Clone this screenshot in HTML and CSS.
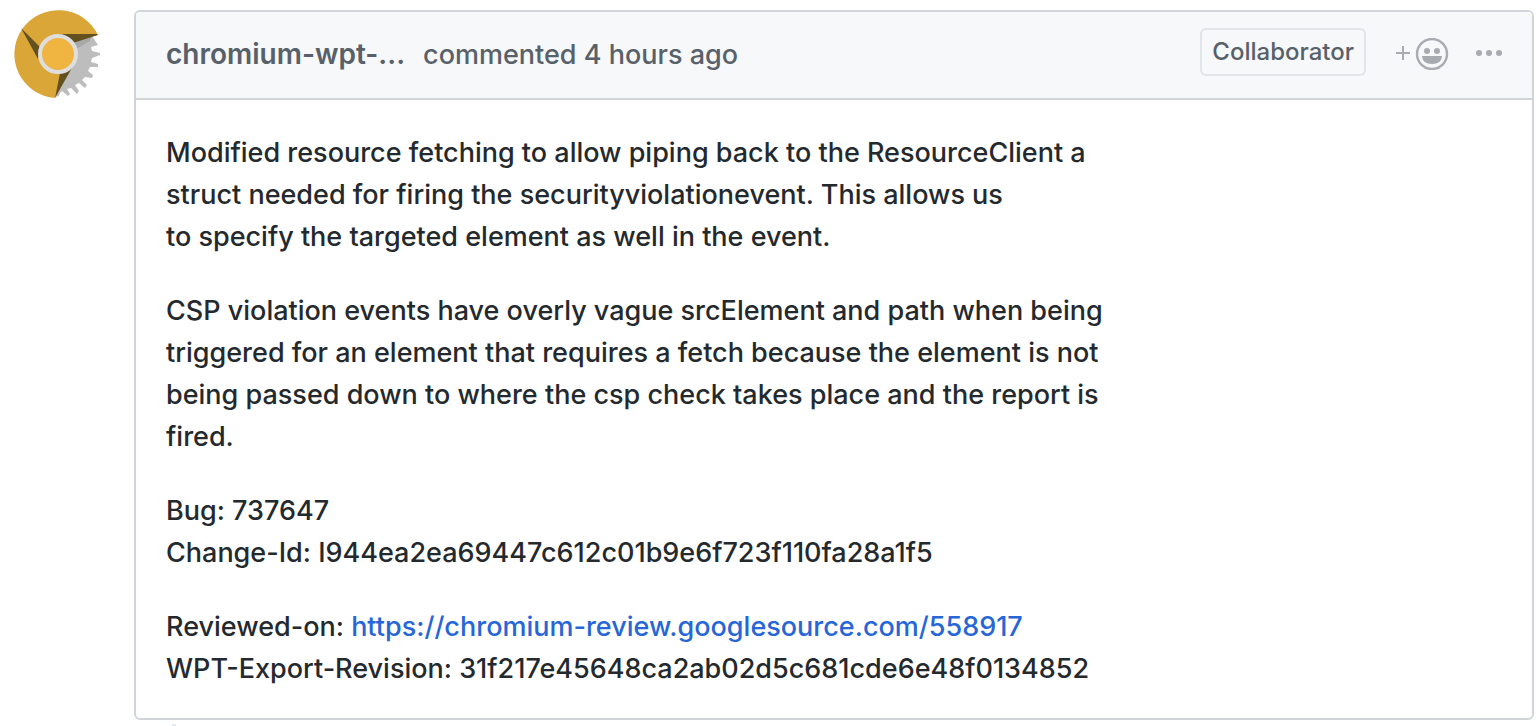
FILE: index.html
```html
<!DOCTYPE html>
<html lang="en">
<head>
<meta charset="utf-8">
<title>Comment</title>
<link rel="stylesheet" href="styles.css">
</head>
<body>
<main class="timeline">
  <svg class="avatar" viewBox="0 0 88 88" role="img" aria-label="chromium-wpt-export-bot">
    <path fill="#bdbdbd" d="M44 26H78L82 32L84 35L77 37L78 41L86 43L86 45L78 48L77 52L84 54L84 57L76 57L74 61L79 65L78 68L71 67L68 70L73 75L71 78L65 73L61 75L65 81L63 84L57 78L53 79L56 84L54 86L48 81L46 83L45 86L41 87L44 44Z"/>
    <path fill="#a8a8a8" d="M60 31L77 27L76 31L62 39Z"/>
    <path fill="#dba638" d="M84 25A44 44 0 1 0 41 88L50 62L44 44L60 24Z"/>
    <path fill="#63501f" d="M44 24H83L84 25L59 33ZM7 18L26 37L24 49ZM41 88L46 63L59 56Z"/>
    <circle cx="44" cy="44" r="18" fill="#f0b541" stroke="#dedede" stroke-width="4"/>
  </svg>
  <article class="comment">
    <header class="comment-header">
      <h3 class="comment-title"><strong class="author">chromium-wpt-...</strong><span>commented 4 hours ago</span></h3>
      <span class="label">Collaborator</span>
      <button class="icon-button reaction" aria-label="Add your reaction">
        <svg width="54" height="32" viewBox="0 0 54 32">
          <path d="M1 15H15M8 8V22" stroke="#a8abb0" stroke-width="2"/>
          <circle cx="37" cy="16" r="15" fill="none" stroke="#a8abb0" stroke-width="2.4"/>
          <g fill="#a8abb0"><circle cx="32" cy="13" r="3"/><circle cx="42" cy="13" r="3"/><path d="M27 18H47C47 23 43 26 37 26S27 23 27 18Z"/></g>
        </svg>
      </button>
      <button class="icon-button menu" aria-label="More options">
        <svg width="26" height="6" viewBox="0 0 26 6" fill="#a8abb0"><circle cx="3" cy="3" r="3"/><circle cx="13" cy="3" r="3"/><circle cx="23" cy="3" r="3"/></svg>
      </button>
    </header>
    <div class="comment-body">
      <p>Modified resource fetching to allow piping back to the ResourceClient a<br>struct needed for firing the securityviolationevent. This allows us<br>to specify the targeted element as well in the event.</p>
      <p>CSP violation events have overly vague srcElement and path when being<br>triggered for an element that requires a fetch because the element is not<br>being passed down to where the csp check takes place and the report is<br>fired.</p>
      <p>Bug: 737647<br>Change-Id: I944ea2ea69447c612c01b9e6f723f110fa28a1f5</p>
      <p>Reviewed-on: <a href="https://chromium-review.googlesource.com/558917">https://chromium-review.googlesource.com/558917</a><br>WPT-Export-Revision: 31f217e45648ca2ab02d5c681cde6e48f0134852</p>
    </div>
  </article>
</main>
<div class="timeline-line"></div>
</body>
</html>
```
FILE: styles.css
```css
* { box-sizing: border-box; }
body {
  margin: 0;
  background: #fff;
  color: #24292e;
  font-family: Inter, "Liberation Sans", sans-serif;
  font-size: 27px;
  font-weight: 450;
  line-height: 42px;
}
.timeline {
  display: flex;
  align-items: flex-start;
  gap: 32px;
  padding: 10px 6px 0 14px;
}
.avatar { flex: none; width: 88px; height: 88px; border-radius: 4px; }
.comment {
  flex: 1;
  min-width: 0;
  border: 2px solid #d1d5da;
  border-radius: 6px;
}
.comment-header {
  display: flex;
  align-items: center;
  padding: 16px 30px 22px;
  color: #586069;
  background: #f6f8fa;
  border-bottom: 2px solid #d1d5da;
  border-radius: 4px 4px 0 0;
}
.comment-title {
  display: flex;
  flex: 1;
  align-items: baseline;
  gap: 18px;
  margin: 0;
  padding-top: 4px;
  font-size: 27px;
  font-weight: 450;
}
.author { font-size: 28px; font-weight: 600; }
.label {
  padding: 0 10px;
  border: 2px solid #e1e4e8;
  border-radius: 6px;
  font-size: 24px;
  line-height: 44px;
}
.icon-button {
  display: flex;
  padding: 0;
  border: 0;
  background: none;
  cursor: pointer;
}
.reaction { margin-left: 29px; padding-top: 4px; }
.menu { margin-left: 27px; padding-top: 2px; }
.comment-body { padding: 32px 30px 28px; }
.comment-body p { margin: 0 0 32px; }
.comment-body p:last-child { margin-bottom: 0; }
a { color: #2766d6; text-decoration: none; }
.timeline-line {
  width: 4px;
  height: 2px;
  margin: 4px 0 0 172px;
  background: #e6ebf1;
}
```
